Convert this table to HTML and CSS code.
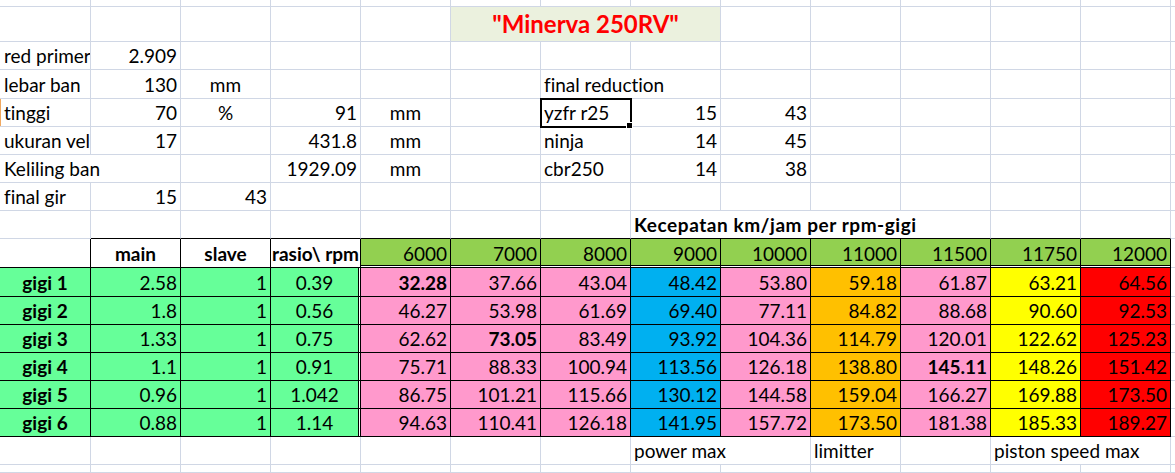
FILE: index.html
```html
<!DOCTYPE html>
<html lang="id">
<head>
<meta charset="utf-8">
<title>Minerva 250RV</title>
<link rel="stylesheet" href="styles.css">
</head>
<body>
<div class="sheet">
  <!-- row 0 (partial) -->
  <div class="c"></div><div class="c"></div><div class="c"></div><div class="c"></div><div class="c"></div><div class="c"></div><div class="c"></div><div class="c"></div><div class="c"></div><div class="c"></div><div class="c"></div><div class="c"></div><div class="c"></div><div class="c e"></div>
  <!-- row 1 title -->
  <div class="c"></div><div class="c"></div><div class="c"></div><div class="c"></div><div class="c"></div>
  <div class="c s3 m title">"Minerva 250RV"</div>
  <div class="c"></div><div class="c"></div><div class="c"></div><div class="c"></div><div class="c"></div><div class="c e"></div>
  <!-- row 2 -->
  <div class="c l first">red primer</div><div class="c r">2.909</div>
  <div class="c"></div><div class="c"></div><div class="c"></div><div class="c"></div><div class="c"></div><div class="c"></div><div class="c"></div><div class="c"></div><div class="c"></div><div class="c"></div><div class="c"></div><div class="c e"></div>
  <!-- row 3 -->
  <div class="c l first">lebar ban</div><div class="c r">130</div><div class="c m">mm</div>
  <div class="c"></div><div class="c"></div><div class="c"></div>
  <div class="c s2 l">final reduction</div>
  <div class="c"></div><div class="c"></div><div class="c"></div><div class="c"></div><div class="c"></div><div class="c e"></div>
  <!-- row 4 -->
  <div class="c l first selrow">tinggi</div><div class="c r">70</div><div class="c m">%</div><div class="c r">91</div><div class="c m">mm</div>
  <div class="c"></div>
  <div class="c l sel">yzfr r25</div><div class="c r">15</div><div class="c r">43</div>
  <div class="c"></div><div class="c"></div><div class="c"></div><div class="c"></div><div class="c e"></div>
  <!-- row 5 -->
  <div class="c l first">ukuran vel</div><div class="c r">17</div><div class="c"></div><div class="c r">431.8</div><div class="c m">mm</div>
  <div class="c"></div>
  <div class="c l">ninja</div><div class="c r">14</div><div class="c r">45</div>
  <div class="c"></div><div class="c"></div><div class="c"></div><div class="c"></div><div class="c e"></div>
  <!-- row 6 -->
  <div class="c s2 l first">Keliling ban</div><div class="c"></div><div class="c r">1929.09</div><div class="c m">mm</div>
  <div class="c"></div>
  <div class="c l">cbr250</div><div class="c r">14</div><div class="c r">38</div>
  <div class="c"></div><div class="c"></div><div class="c"></div><div class="c"></div><div class="c e"></div>
  <!-- row 7 -->
  <div class="c l first">final gir</div><div class="c r">15</div><div class="c r">43</div>
  <div class="c"></div><div class="c"></div><div class="c"></div><div class="c"></div><div class="c"></div><div class="c"></div><div class="c"></div><div class="c"></div><div class="c"></div><div class="c"></div><div class="c e"></div>
  <!-- row 8 -->
  <div class="c"></div>
  <div class="c kb"></div><div class="c kb"></div><div class="c kb"></div><div class="c kb"></div><div class="c kb"></div><div class="c kb"></div>
  <div class="c s4 l b kb wide">Kecepatan km/jam per rpm-gigi</div>
  <div class="c kb"></div><div class="c kb"></div><div class="c e"></div>
  <!-- row 9 header -->
  <div class="c k"></div>
  <div class="c m b k">main</div><div class="c m b k">slave</div><div class="c m b k">rasio\ rpm</div>
  <div class="c r k hg">6000</div><div class="c r k hg">7000</div><div class="c r k hg">8000</div><div class="c r k hg">9000</div><div class="c r k hg">10000</div><div class="c r k hg">11000</div><div class="c r k hg">11500</div><div class="c r k hg">11750</div><div class="c r k hg">12000</div>
  <div class="c e"></div>
  <!-- gigi 1 -->
  <div class="c m b k lg">gigi 1</div><div class="c r k lg">2.58</div><div class="c r k lg">1</div><div class="c m k lg dbl">0.39</div>
  <div class="c r k pk b">32.28</div><div class="c r k pk">37.66</div><div class="c r k pk">43.04</div><div class="c r k bl">48.42</div><div class="c r k pk">53.80</div><div class="c r k or">59.18</div><div class="c r k pk">61.87</div><div class="c r k ye">63.21</div><div class="c r k rd">64.56</div>
  <div class="c e"></div>
  <!-- gigi 2 -->
  <div class="c m b k lg">gigi 2</div><div class="c r k lg">1.8</div><div class="c r k lg">1</div><div class="c m k lg dbl">0.56</div>
  <div class="c r k pk">46.27</div><div class="c r k pk">53.98</div><div class="c r k pk">61.69</div><div class="c r k bl">69.40</div><div class="c r k pk">77.11</div><div class="c r k or">84.82</div><div class="c r k pk">88.68</div><div class="c r k ye">90.60</div><div class="c r k rd">92.53</div>
  <div class="c e"></div>
  <!-- gigi 3 -->
  <div class="c m b k lg">gigi 3</div><div class="c r k lg">1.33</div><div class="c r k lg">1</div><div class="c m k lg dbl">0.75</div>
  <div class="c r k pk">62.62</div><div class="c r k pk b">73.05</div><div class="c r k pk">83.49</div><div class="c r k bl">93.92</div><div class="c r k pk">104.36</div><div class="c r k or">114.79</div><div class="c r k pk">120.01</div><div class="c r k ye">122.62</div><div class="c r k rd">125.23</div>
  <div class="c e"></div>
  <!-- gigi 4 -->
  <div class="c m b k lg">gigi 4</div><div class="c r k lg">1.1</div><div class="c r k lg">1</div><div class="c m k lg dbl">0.91</div>
  <div class="c r k pk">75.71</div><div class="c r k pk">88.33</div><div class="c r k pk">100.94</div><div class="c r k bl">113.56</div><div class="c r k pk">126.18</div><div class="c r k or">138.80</div><div class="c r k pk b">145.11</div><div class="c r k ye">148.26</div><div class="c r k rd">151.42</div>
  <div class="c e"></div>
  <!-- gigi 5 -->
  <div class="c m b k lg">gigi 5</div><div class="c r k lg">0.96</div><div class="c r k lg">1</div><div class="c m k lg dbl">1.042</div>
  <div class="c r k pk">86.75</div><div class="c r k pk">101.21</div><div class="c r k pk">115.66</div><div class="c r k bl">130.12</div><div class="c r k pk">144.58</div><div class="c r k or">159.04</div><div class="c r k pk">166.27</div><div class="c r k ye">169.88</div><div class="c r k rd">173.50</div>
  <div class="c e"></div>
  <!-- gigi 6 -->
  <div class="c m b k lg">gigi 6</div><div class="c r k lg">0.88</div><div class="c r k lg">1</div><div class="c m k lg dbl">1.14</div>
  <div class="c r k pk">94.63</div><div class="c r k pk">110.41</div><div class="c r k pk">126.18</div><div class="c r k bl">141.95</div><div class="c r k pk">157.72</div><div class="c r k or">173.50</div><div class="c r k pk">181.38</div><div class="c r k ye">185.33</div><div class="c r k rd">189.27</div>
  <div class="c e"></div>
  <!-- row 16 notes -->
  <div class="c"></div><div class="c"></div><div class="c"></div><div class="c"></div><div class="c"></div><div class="c"></div><div class="c"></div>
  <div class="c s2 l">power max</div><div class="c l">limitter</div><div class="c"></div><div class="c s2 l">piston speed max</div>
  <div class="c e"></div>
  <!-- row 17 (partial) -->
  <div class="c"></div><div class="c"></div><div class="c"></div><div class="c"></div><div class="c"></div><div class="c"></div><div class="c"></div><div class="c"></div><div class="c"></div><div class="c"></div><div class="c"></div><div class="c"></div><div class="c"></div><div class="c e"></div>
</div>
</body>
</html>
```

FILE: styles.css
```css
html, body {
  margin: 0;
  padding: 0;
  background: #ffffff;
}

.sheet {
  display: grid;
  grid-template-columns: 91px repeat(12, 90px) 4px;
  grid-template-rows: 7px 35px 28px 29px 28px 28px 28px 28px 28px 29px 29px 28px 28px 28px 28px 28px 28px 8px;
  width: 1175px;
  height: 473px;
  overflow: hidden;
  font-family: Lato, "Liberation Sans", sans-serif;
  font-size: 19px;
  font-variant-ligatures: none;
  color: #000000;
  background: #ffffff;
}

.c {
  box-sizing: border-box;
  min-width: 0;
  display: flex;
  align-items: flex-end;
  padding: 0 3px 3px 3px;
  border-right: 1px solid #d0d7e5;
  border-bottom: 1px solid #d0d7e5;
  white-space: nowrap;
  overflow: hidden;
  line-height: 20px;
}

.e { border-right: none; padding: 0; }
.first { padding-left: 4px; }

.l { justify-content: flex-start; }
.r { justify-content: flex-end; }
.m { justify-content: center; }
.b { font-weight: 700; }
.wide { letter-spacing: 0.55px; }

.s2 { grid-column: span 2; }
.s3 { grid-column: span 3; }
.s4 { grid-column: span 4; }

.title {
  background: #ebf1de;
  color: #ff0000;
  font-weight: 700;
  font-size: 24px;
  line-height: 26px;
  padding-bottom: 4px;
}

.kb { border-bottom-color: #000000; }
.k { border-right-color: #000000; border-bottom-color: #000000; }

.hg {
  background: #92d050;
  background-clip: padding-box;
  border-bottom: 3px double #000000;
  padding-bottom: 1px;
}

.lg { background: #66ff99; }
.dbl { border-right: 3px double #000000; background-clip: padding-box; }
.pk { background: #ff99cc; }
.bl { background: #00b0f0; }
.or { background: #ffc000; }
.ye { background: #ffff00; }
.rd { background: #ff0000; }

.selrow { box-shadow: inset 1px 0 0 #f0a860; }

.sel {
  position: relative;
  overflow: visible;
  outline: 2px solid #000000;
  outline-offset: -1px;
  z-index: 1;
}

.sel::after {
  content: "";
  position: absolute;
  right: -3px;
  bottom: -3px;
  width: 5px;
  height: 5px;
  background: #000000;
  border: 1px solid #ffffff;
}
```
